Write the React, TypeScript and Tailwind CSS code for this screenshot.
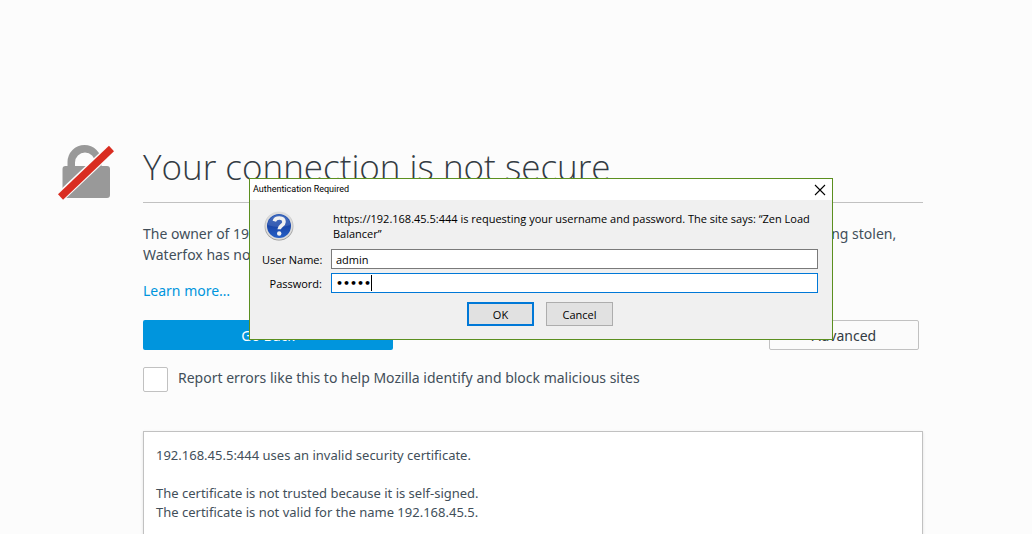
import { useState } from "react";

function InsecureLock() {
  return (
    <svg viewBox="0 0 56 56" className="h-14 w-14" aria-hidden="true">
      <path
        fill="#999999"
        d="M9.500 18a17 17 0 0 1 34 0v4h5.500a3 3 0 0 1 3 3v26a3 3 0 0 1-3 3H7.500a3 3 0 0 1-3-3V25a3 3 0 0 1 3-3h2zM17 22h20V18.500a10 10 0 0 0-20 0z"
      />
      <path d="M0 55L56 2" stroke="#fcfcfc" strokeWidth="10" />
      <path d="M2.500 53L53.500 4.500" stroke="#d92d21" strokeWidth="7.400" />
    </svg>
  );
}

function QuestionIcon() {
  return (
    <svg viewBox="0 0 30 30" className="h-[30px] w-[30px]" aria-hidden="true">
      <defs>
        <linearGradient id="rim" x1="0" y1="0" x2="0" y2="1">
          <stop offset="0" stopColor="#e0e0e0" />
          <stop offset="1" stopColor="#8f8f8f" />
        </linearGradient>
        <linearGradient id="face" x1="0" y1="0" x2="0" y2="1">
          <stop offset="0" stopColor="#2d5cb8" />
          <stop offset="0.5" stopColor="#1a46a8" />
          <stop offset="1" stopColor="#2660c6" />
        </linearGradient>
      </defs>
      <circle cx="15" cy="15" r="14.500" fill="url(#rim)" />
      <circle cx="15" cy="15" r="13.700" fill="#dcdcdc" />
      <circle cx="15" cy="15" r="12" fill="url(#face)" />
      <path d="M3.500 14a11.600 11.600 0 0 1 23 0q-11 4-23 0z" fill="#ffffff" opacity="0.12" />
      <path
        d="M10.300 10.200C11.500 6 20 5.800 20 11c0 3.600-4.800 3.500-4.800 7.300"
        fill="none"
        stroke="#f1f1f1"
        strokeWidth="3.600"
      />
      <circle cx="15.200" cy="22.500" r="2.200" fill="#f1f1f1" />
    </svg>
  );
}

function AuthDialog() {
  const [user, setUser] = useState("admin");
  const [password, setPassword] = useState("admin");
  return (
    <div
      role="dialog"
      aria-labelledby="auth-title"
      className="absolute top-[178px] left-[249px] w-[584px] border border-[#5b8f1f] bg-[#f0f0f0] font-['Open_Sans','Noto_Sans',sans-serif] text-[11px] leading-[15px] text-black"
    >
      <div className="flex h-[21px] items-center justify-between bg-white pr-[6px] pl-[3px]">
        <h2 id="auth-title" className="font-['Roboto','Open_Sans',sans-serif] text-[9px]">Authentication Required</h2>
        <button type="button" aria-label="Close" className="flex h-3 w-3 items-center justify-center">
          <svg viewBox="0 0 12 12" className="h-3 w-3" aria-hidden="true">
            <path d="M1 1L11 11M11 1L1 11" stroke="#000000" strokeWidth="1.100" />
          </svg>
        </button>
      </div>
      <form className="px-[14px] pt-[11px] pb-[13px]" onSubmit={(e) => e.preventDefault()}>
        <div className="flex pb-2">
          <div className="w-[69px] shrink-0">
            <QuestionIcon />
          </div>
          <p>
            https://192.168.45.5:444 is requesting your username and password. The site says: “Zen Load Balancer”
          </p>
        </div>
        <div className="-ml-0.5 grid grid-cols-[60px_1fr] items-center gap-x-[9px] gap-y-1">
          <label htmlFor="user" className="text-right whitespace-nowrap">User Name:</label>
          <input
            id="user"
            type="text"
            value={user}
            onChange={(e) => setUser(e.target.value)}
            className="h-5 min-w-0 border border-[#7a7a7a] bg-white px-1 outline-none"
          />
          <label htmlFor="password" className="text-right whitespace-nowrap">Password:</label>
          <div className="relative flex">
            <input
              id="password"
              type="password"
              value={password}
              onChange={(e) => setPassword(e.target.value)}
              className="h-5 w-full min-w-0 border border-[#0078d7] bg-white px-1 font-['DejaVu_Sans',sans-serif] text-[11px] font-bold caret-transparent outline-none"
            />
            <span className="absolute top-[2px] left-10 h-4 w-px bg-black" />
          </div>
        </div>
        <div className="flex justify-center gap-3 pt-[9px] pr-0.5">
          <button type="submit" className="h-6 w-[67px] border-2 border-[#0078d7] bg-[#e1e1e1]">OK</button>
          <button type="button" className="h-6 w-[67px] border border-[#adadad] bg-[#e1e1e1]">Cancel</button>
        </div>
      </form>
    </div>
  );
}

export default function App() {
  return (
    <div className="relative h-screen overflow-hidden bg-[#fcfcfc] font-['Noto_Sans','Open_Sans',sans-serif] text-[14px] leading-[21px] text-[#424f5a]">
      <main className="flex pt-[144px] pr-[109px] pl-[58px]">
        <div className="w-[85px] shrink-0">
          <InsecureLock />
        </div>
        <div className="min-w-0 flex-1">
          <h1 className="border-b border-[#c1c1c1] pb-3 font-['Open_Sans','Noto_Sans',sans-serif] text-[35px] leading-[46px] font-light text-[#333b43]">
            Your connection is not secure
          </h1>
          <p className="pt-5">
            The owner of 192.168.45.5 has configured their website improperly. To protect your information from being stolen, Waterfox has not connected to this website.
          </p>
          <p className="pt-[15px]">
            <a href="#learn-more" className="text-[#0095dd]">Learn more…</a>
          </p>
          <div className="flex justify-between pt-[19px] pr-1">
            <button type="button" className="h-[30px] w-[250px] rounded-xs bg-[#0095dd] text-white">Go Back</button>
            <button type="button" className="h-[30px] w-[150px] rounded-xs border border-[#c1c1c1] bg-[#fbfbfb] text-[#333b43]">Advanced</button>
          </div>
          <div className="flex gap-[10px] pt-[17px]">
            <input
              id="report"
              type="checkbox"
              className="h-[25px] w-[25px] appearance-none rounded-xs border border-[#c1c1c1] bg-white"
            />
            <label htmlFor="report">Report errors like this to help Mozilla identify and block malicious sites</label>
          </div>
          <section className="mt-[39px] border border-[#c1c1c1] bg-white px-3 pt-[14px] pb-10 text-[13px] leading-[19px] shadow-sm">
            <p>192.168.45.5:444 uses an invalid security certificate.</p>
            <p className="pt-[19px]">The certificate is not trusted because it is self-signed.</p>
            <p>The certificate is not valid for the name 192.168.45.5.</p>
          </section>
        </div>
      </main>
      <AuthDialog />
    </div>
  );
}
